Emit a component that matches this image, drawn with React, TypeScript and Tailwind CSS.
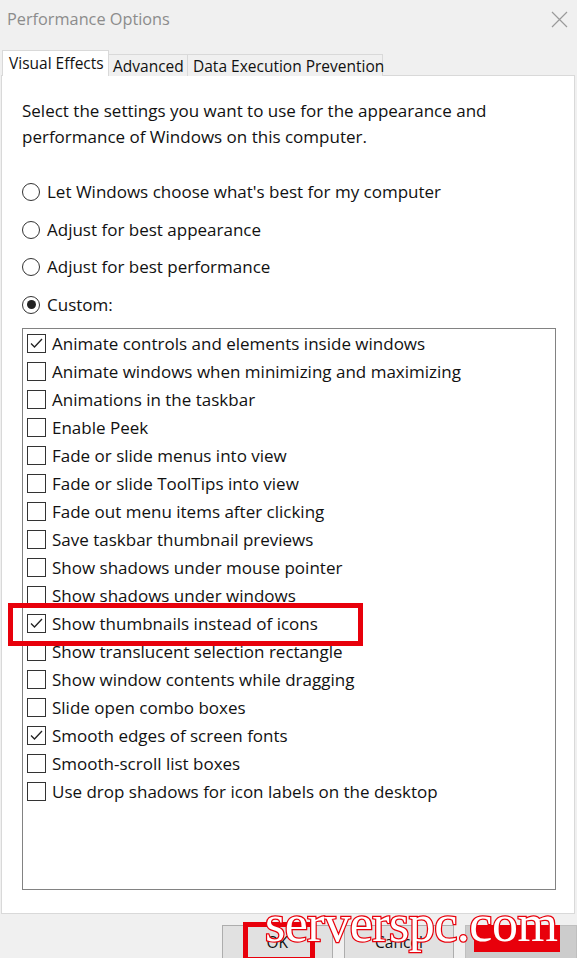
import React from 'react';

const items: { label: string; checked: boolean }[] = [
  { label: 'Animate controls and elements inside windows', checked: true },
  { label: 'Animate windows when minimizing and maximizing', checked: false },
  { label: 'Animations in the taskbar', checked: false },
  { label: 'Enable Peek', checked: false },
  { label: 'Fade or slide menus into view', checked: false },
  { label: 'Fade or slide ToolTips into view', checked: false },
  { label: 'Fade out menu items after clicking', checked: false },
  { label: 'Save taskbar thumbnail previews', checked: false },
  { label: 'Show shadows under mouse pointer', checked: false },
  { label: 'Show shadows under windows', checked: false },
  { label: 'Show thumbnails instead of icons', checked: true },
  { label: 'Show translucent selection rectangle', checked: false },
  { label: 'Show window contents while dragging', checked: false },
  { label: 'Slide open combo boxes', checked: false },
  { label: 'Smooth edges of screen fonts', checked: true },
  { label: 'Smooth-scroll list boxes', checked: false },
  { label: 'Use drop shadows for icon labels on the desktop', checked: false },
];

const radios = [
  { label: "Let Windows choose what's best for my computer", on: false },
  { label: 'Adjust for best appearance', on: false },
  { label: 'Adjust for best performance', on: false },
  { label: 'Custom:', on: true },
];

function Radio({ on }: { on: boolean }) {
  return (
    <span className="w-[18px] h-[18px] rounded-full border border-[#333] bg-white flex items-center justify-center shrink-0">
      {on && <span className="w-[9px] h-[9px] rounded-full bg-[#222]" />}
    </span>
  );
}

function Check({ on }: { on: boolean }) {
  return (
    <span className="w-[19px] h-[19px] border border-[#333] bg-white flex items-center justify-center shrink-0">
      {on && (
        <svg width="15" height="15" viewBox="0 0 15 15">
          <path d="M2 7.5 L5.5 11 L13 3" fill="none" stroke="#222" strokeWidth="1.3" />
        </svg>
      )}
    </span>
  );
}

export default function App() {
  return (
    <div className="relative w-[577px] h-[958px] overflow-hidden bg-[#f0f0f0] text-[#111] font-['Segoe_UI','Open_Sans',sans-serif]">
      {/* title bar */}
      <div className="h-[38px] flex items-center justify-between pl-[7px] pr-[9px]">
        <span className="text-[16.3px] text-[#8c8c8c]">Performance Options</span>
        <svg width="17" height="17" viewBox="0 0 17 17">
          <path d="M1 1 L16 16 M16 1 L1 16" stroke="#9a9a9a" strokeWidth="1.2" />
        </svg>
      </div>

      {/* tabs */}
      <div className="flex items-end pl-[2px] mt-[12px] h-[26px] text-[15.5px] whitespace-nowrap">
        <div className="h-[26px] w-[107px] bg-white border border-b-0 border-[#d9d9d9] pl-[6px] leading-[24px] relative z-10">
          Visual Effects
        </div>
        <div className="h-[22px] w-[79px] bg-[#f0f0f0] border border-l-0 border-b-0 border-[#d9d9d9] pl-[4px] leading-[22px]">
          Advanced
        </div>
        <div className="h-[22px] w-[195px] bg-[#f0f0f0] border border-l-0 border-b-0 border-[#d9d9d9] pl-[5px] leading-[22px]">
          Data Execution Prevention
        </div>
      </div>

      {/* panel */}
      <div className="ml-[1px] w-[574px] h-[839px] -mt-[1px] bg-white border border-[#d9d9d9] pl-[20px] pr-[18px] pt-[22px]">
        <p className="text-[17px] leading-[26px]">
          Select the settings you want to use for the appearance and
          <br />
          performance of Windows on this computer.
        </p>

        <div className="mt-[23px]">
          {radios.map((r) => (
            <div key={r.label} className="h-[37.7px] flex items-center gap-[7px] text-[17px]">
              <Radio on={r.on} />
              <span>{r.label}</span>
            </div>
          ))}
        </div>

        <div className="mt-[4px] h-[562px] border border-[#828282] pt-[1px] pl-[4px]">
          {items.map((it) => (
            <div key={it.label} className="h-[28px] flex items-center gap-[6px] text-[17px]">
              <Check on={it.checked} />
              <span>{it.label}</span>
            </div>
          ))}
        </div>
      </div>

      {/* buttons */}
      <div className="flex gap-[11px] pl-[222px] mt-[11px] text-[15.5px]">
        <div className="w-[111px] h-[36px] bg-[#e1e1e1] border border-[#adadad] flex items-center justify-center">
          OK
        </div>
        <div className="w-[111px] h-[36px] bg-[#e1e1e1] border border-[#adadad] flex items-center justify-center">
          Cancel
        </div>
        <div className="w-[112px] h-[36px] bg-[#cccccc] border border-[#bfbfbf] text-[#8a8a8a] flex items-center justify-center">
          Apply
        </div>
      </div>

      {/* annotation overlays */}
      <div className="absolute left-[8px] top-[603px] w-[355px] h-[43px] border-[5px] border-[#e8000b]" />
      <div className="absolute left-[243px] top-[922px] w-[72px] h-[40px] border-[5px] border-[#e8000b]" />
      <div className="absolute left-[474px] top-[925px] w-[86px] h-[27px] bg-[#e8000b]" />
      <div className="absolute left-[265px] top-[898px] text-[52px] leading-none text-white font-['Liberation_Serif',serif] [-webkit-text-stroke:2.5px_#e8000b] [paint-order:stroke_fill] tracking-[-0.5px]">
        serverspc.com
      </div>
    </div>
  );
}
